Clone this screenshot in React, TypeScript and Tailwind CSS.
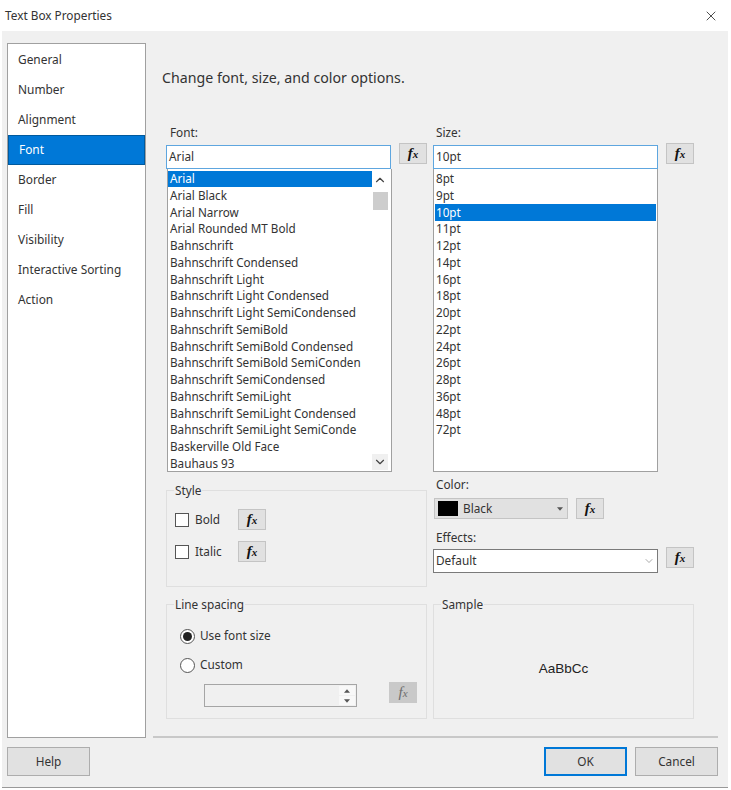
import React from "react";
import { ChevronUp, ChevronDown, X } from "lucide-react";

const fonts = ["Arial","Arial Black","Arial Narrow","Arial Rounded MT Bold","Bahnschrift","Bahnschrift Condensed","Bahnschrift Light","Bahnschrift Light Condensed","Bahnschrift Light SemiCondensed","Bahnschrift SemiBold","Bahnschrift SemiBold Condensed","Bahnschrift SemiBold SemiConden","Bahnschrift SemiCondensed","Bahnschrift SemiLight","Bahnschrift SemiLight Condensed","Bahnschrift SemiLight SemiConde","Baskerville Old Face","Bauhaus 93"];
const sizes = ["8pt","9pt","10pt","11pt","12pt","14pt","16pt","18pt","20pt","22pt","24pt","26pt","28pt","36pt","48pt","72pt"];
const nav = ["General","Number","Alignment","Font","Border","Fill","Visibility","Interactive Sorting","Action"];

function Fx({ disabled = false }: { disabled?: boolean }) {
  return (
    <div className={`w-[28px] h-[21px] shrink-0 flex items-center justify-center border font-['Liberation_Serif',serif] italic leading-none pb-[1px] ${disabled ? "bg-[#c9c9c9] border-[#c9c9c9] text-[#6d6d6d]" : "bg-[#e1e1e1] border-[#c4c4c4] text-[#111] font-bold"}`}>
      <span className="text-[15px]">f</span>
      <span className="text-[11px] mt-[2px]">x</span>
    </div>
  );
}

function Arrow({ up }: { up: boolean }) {
  return (
    <svg width="6" height="4" viewBox="0 0 7 4" className="block">
      <path d={up ? "M3.5 0L7 4H0Z" : "M0 0H7L3.5 4Z"} fill="#555" />
    </svg>
  );
}

function Group({ title, className, children }: { title: string; className: string; children?: React.ReactNode }) {
  return (
    <fieldset className={`border border-[#dfdfdf] ${className}`}>
      <legend className="ml-[7px] px-[1px] text-[11.8px] leading-[14px] text-[#333]">{title}</legend>
      {children}
    </fieldset>
  );
}

function Check({ label }: { label: string }) {
  return (
    <div className="flex items-center h-[21px]">
      <div className="w-[14px] h-[14px] ml-[8px] border border-[#555] bg-white" />
      <span className="ml-[6px] w-[43px] text-[11.8px] text-[#333]">{label}</span>
      <Fx />
    </div>
  );
}

function Radio({ label, on }: { label: string; on?: boolean }) {
  return (
    <div className="flex items-center h-[16px] ml-[13px]">
      <div className="w-[15px] h-[15px] rounded-full border border-[#555] flex items-center justify-center bg-white">
        {on && <div className="w-[9px] h-[9px] rounded-full bg-[#222]" />}
      </div>
      <span className="ml-[5px] text-[11.8px] text-[#333]">{label}</span>
    </div>
  );
}

function Btn({ label, primary }: { label: string; primary?: boolean }) {
  return (
    <div className={`w-[83px] h-[29px] flex items-center justify-center text-[11.8px] text-[#333] bg-[#e1e1e1] ${primary ? "border-2 border-[#0078d7]" : "border border-[#adadad]"}`}>
      {label}
    </div>
  );
}

function Combo({ value }: { value: string }) {
  return (
    <div className="w-[225px] h-[24px] border border-[#5ea6df] bg-white pl-[2px] flex items-center text-[11.8px] text-[#333]">
      {value}
    </div>
  );
}

export default function App() {
  return (
    <div className="w-[731px] h-[790px] bg-white flex flex-col font-['Noto_Sans',sans-serif] overflow-hidden">
      <div className="h-[31px] shrink-0 flex items-center justify-between pt-[1px] pl-[5px] pr-[12px] text-[11.8px] text-[#333]">
        <span>Text Box Properties</span>
        <X size={16} strokeWidth={1.2} color="#222" />
      </div>
      <div className="w-[726px] h-[757px] ml-[2px] bg-[#f0f0f0] border-b border-[#999] flex flex-col">
        <div className="flex flex-1 min-h-0">
          <div className="w-[139px] h-[695px] ml-[5px] mt-[12px] shrink-0 bg-white border border-[#a0a0a0] pt-[1px] flex flex-col">
            {nav.map((n) => (
              <div key={n} className={`h-[30px] shrink-0 flex items-center pl-[10px] text-[11.9px] ${n === "Font" ? "bg-[#0078d7] text-white border border-[#005a9e]" : "text-[#333]"}`}>
                {n}
              </div>
            ))}
          </div>
          <div className="w-[565px] ml-[7px] h-[707px] flex flex-col border-b-2 border-[#c8c8c8]">
            <div className="ml-[9px] mt-[35px] h-[24px] flex items-center text-[14.2px] text-[#333]">
              Change font, size, and color options.
            </div>
            <div className="ml-[13px] mt-[35px] grid grid-cols-[261px_261px] gap-x-[6px]">
              <div className="flex flex-col">
                <div className="ml-[4px] h-[16px] flex items-center text-[11.8px] text-[#333]">Font:</div>
                <div className="flex gap-[8px] mt-[4px]">
                  <Combo value="Arial" />
                  <div className="-mt-[2px]"><Fx /></div>
                </div>
                <div className="w-[225px] h-[303px] ml-[1px] bg-white border border-[#a0a0a0] border-t-0 pt-[1.5px] flex">
                  <div className="w-[204px]">
                    {fonts.map((f, i) => (
                      <div key={f} className={`h-[16.76px] pl-[2px] flex items-center whitespace-nowrap overflow-hidden text-[11.7px] ${i === 0 ? "bg-[#0078d7] text-white" : "text-[#333]"}`}>
                        {f}
                      </div>
                    ))}
                  </div>
                  <div className="w-[16px] h-[299px] flex flex-col items-center">
                    <div className="h-[18px] flex items-center"><ChevronUp size={14} strokeWidth={2} color="#444" /></div>
                    <div className="w-[15px] h-[18px] mt-[3px] bg-[#cdcdcd]" />
                    <div className="flex-1" />
                    <div className="h-[16px] w-[16px] bg-[#f0f0f0] flex items-center justify-center"><ChevronDown size={14} strokeWidth={2} color="#444" /></div>
                  </div>
                </div>
                <Group title="Style" className="mt-[11px] h-[104px] pt-[12px]">
                  <div className="flex flex-col gap-[11px]">
                    <Check label="Bold" />
                    <Check label="Italic" />
                  </div>
                </Group>
              </div>
              <div className="flex flex-col">
                <div className="ml-[3px] h-[16px] flex items-center text-[11.8px] text-[#333]">Size:</div>
                <div className="flex gap-[8px] mt-[4px]">
                  <Combo value="10pt" />
                  <div className="-mt-[2px]"><Fx /></div>
                </div>
                <div className="w-[225px] h-[303px] bg-white border border-[#a0a0a0] border-t-0 pl-[1px] pt-[1.5px]">
                  {sizes.map((s, i) => (
                    <div key={s} className={`w-[221px] h-[16.76px] pl-[1px] flex items-center text-[11.7px] ${i === 2 ? "bg-[#0078d7] text-white" : "text-[#333]"}`}>
                      {s}
                    </div>
                  ))}
                </div>
                <div className="ml-[3px] mt-[5px] h-[16px] flex items-center text-[11.8px] text-[#333]">Color:</div>
                <div className="flex gap-[8px] mt-[5px] ml-[1px]">
                  <div className="w-[134px] h-[21px] bg-[#e1e1e1] border border-[#c4c4c4] flex items-center pl-[3px] pr-[4px] text-[11.8px] text-[#333]">
                    <div className="w-[20px] h-[15px] bg-black" />
                    <span className="ml-[5px] flex-1">Black</span>
                    <Arrow up={false} />
                  </div>
                  <Fx />
                </div>
                <div className="ml-[3px] mt-[11px] h-[16px] flex items-center text-[11.8px] text-[#333]">Effects:</div>
                <div className="flex gap-[8px] mt-[3px]">
                  <div className="w-[225px] h-[24px] border border-[#7a7a7a] bg-white pl-[2px] pr-[2px] flex items-center justify-between text-[11.8px] text-[#333]">
                    Default
                    <ChevronDown size={12} strokeWidth={1} color="#555" />
                  </div>
                  <div className="-mt-[2px]"><Fx /></div>
                </div>
              </div>
              <Group title="Line spacing" className="mt-[10px] h-[122px] pt-[17px]">
                <div className="flex flex-col gap-[13px]">
                  <Radio label="Use font size" on />
                  <Radio label="Custom" />
                </div>
                <div className="flex items-start ml-[37px] mt-[9px]">
                  <div className="w-[153px] h-[23px] mt-[2px] border border-[#a5a5a5] flex justify-end items-center pr-[1px]">
                    <div className="w-[16px] flex flex-col gap-[1px]">
                      <div className="h-[9px] bg-[#f8f8f8] flex items-center justify-center"><Arrow up /></div>
                      <div className="h-[9px] bg-[#f8f8f8] flex items-center justify-center"><Arrow up={false} /></div>
                    </div>
                  </div>
                  <div className="ml-[32px]"><Fx disabled /></div>
                </div>
              </Group>
              <Group title="Sample" className="mt-[10px] h-[122px]">
                <div className="h-[105px] pt-[12px] flex items-center justify-center font-['Liberation_Sans',sans-serif] text-[13.5px] text-[#222]">
                  AaBbCc
                </div>
              </Group>
            </div>
          </div>
        </div>
        <div className="h-[49px] shrink-0 flex items-start pt-[9px] pl-[5px]">
          <Btn label="Help" />
          <div className="ml-auto mr-[10px] flex gap-[8px]">
            <Btn label="OK" primary />
            <Btn label="Cancel" />
          </div>
        </div>
      </div>
    </div>
  );
}
